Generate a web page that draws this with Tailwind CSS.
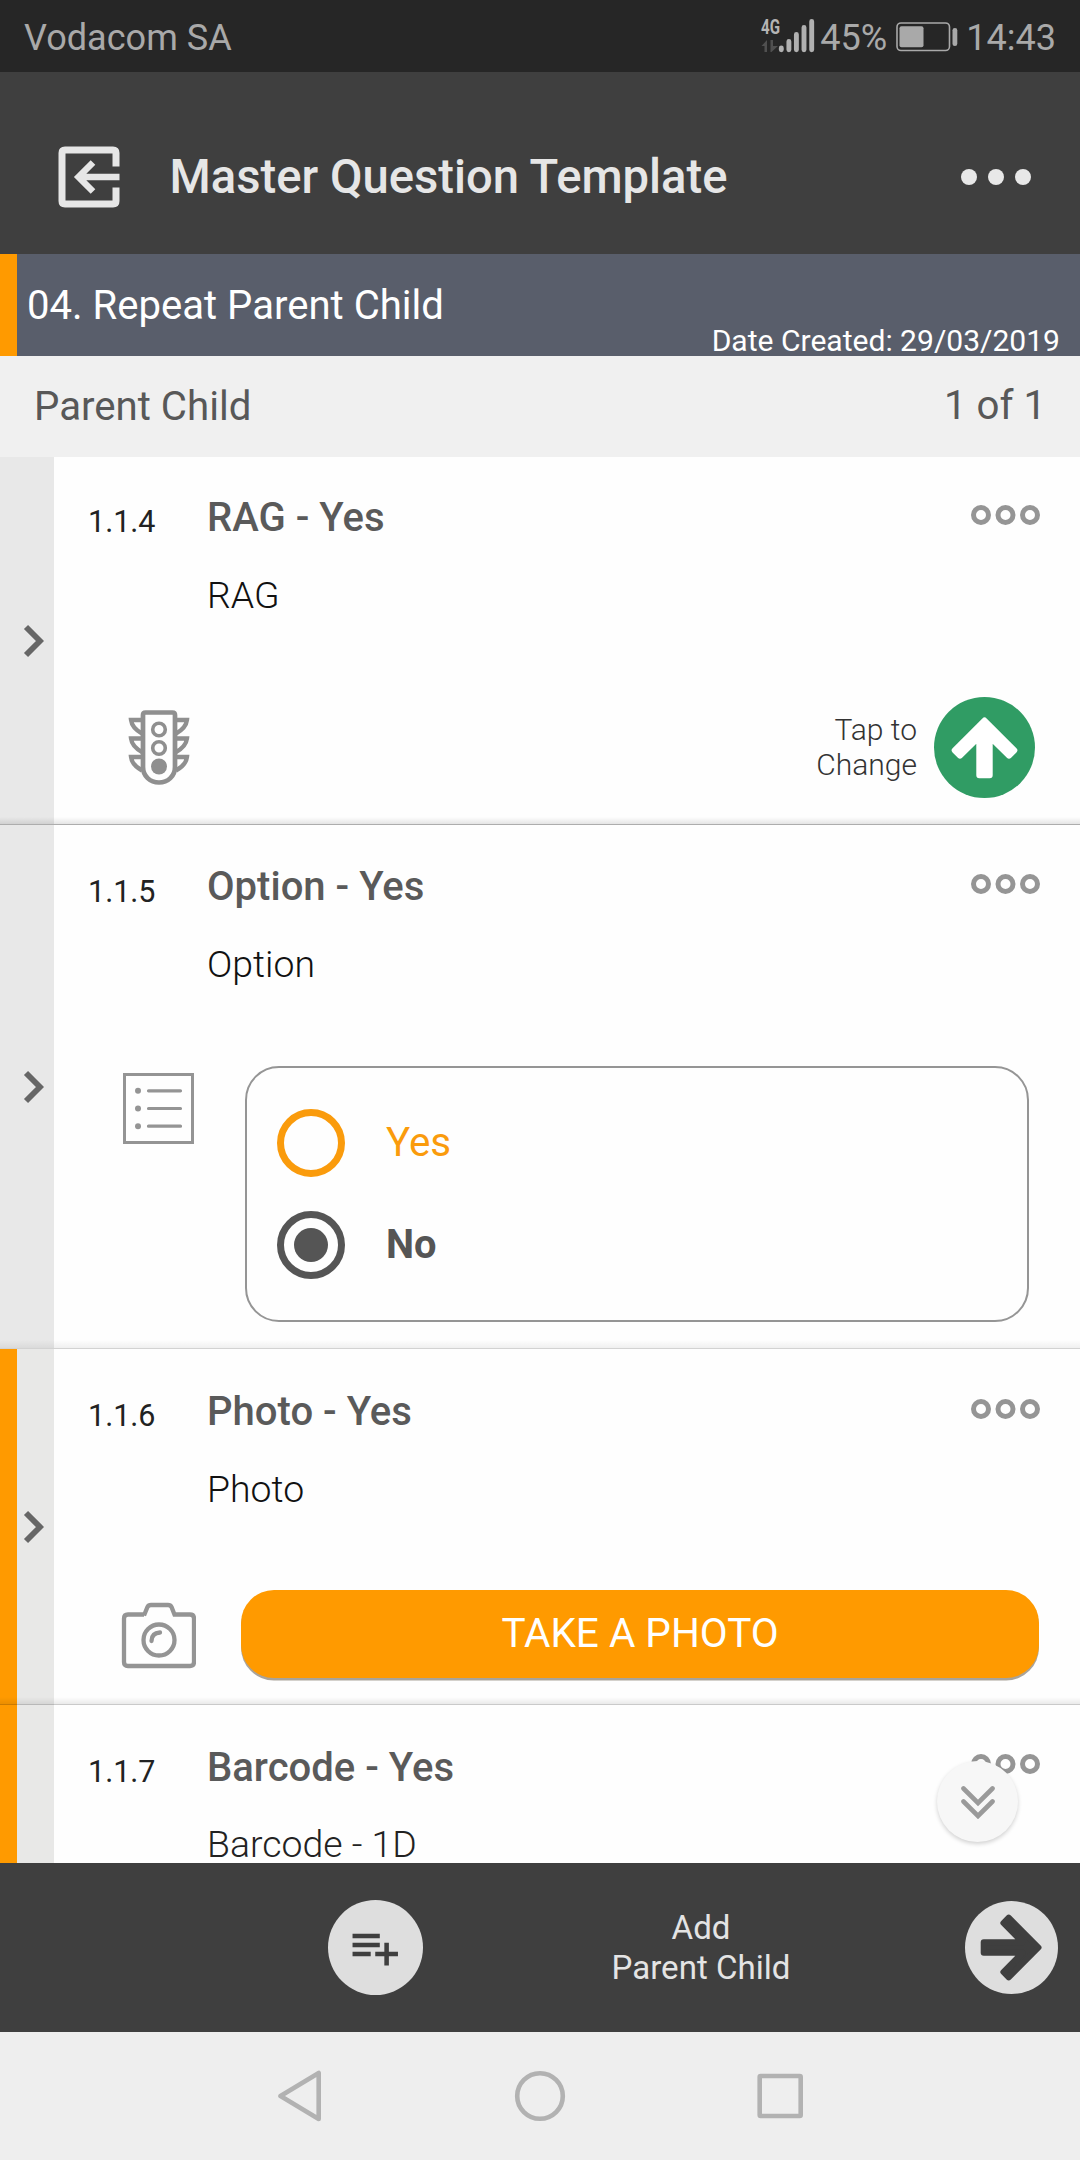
<!DOCTYPE html>
<html lang="en">
<head>
<meta charset="utf-8">
<title>Master Question Template</title>
<script src="https://cdn.jsdelivr.net/npm/@tailwindcss/browser@4"></script>
</head>
<body class="bg-white">
<svg class="hidden">
  <defs>
    <symbol id="more" viewBox="0 0 69 20"><g fill="none" stroke="#959595" stroke-width="5"><circle cx="10" cy="10" r="7.500"/><circle cx="34.5" cy="10" r="7.500"/><circle cx="59" cy="10" r="7.500"/></g></symbol>
    <symbol id="chev" viewBox="0 0 21 34"><path d="M3 3 17 17 3 31" fill="none" stroke="#666" stroke-width="5.8"/></symbol>
    <path id="arrow" d="M50.5 23.5 20.7 53.3 26 58.6 45.3 39.5V78.3H55.7V39.5L75 58.6 80.3 53.3Z" stroke-width="6" stroke-linejoin="round"/>
  </defs>
</svg>
<div class="flex h-[2160px] w-[1080px] flex-col overflow-hidden font-['Roboto',sans-serif]">

  <!-- Status bar -->
  <div class="flex h-[72px] shrink-0 items-center bg-[#262626] pt-[3px] pl-[24px] pr-[24px] text-[36.1px] leading-[40px] text-[#a9a9a9]">
    <span class="grow">Vodacom SA</span>
    <svg class="-mt-[3px] mr-[5px] h-[36px] w-[54px]" viewBox="761 18 54 36">
      <text x="761" y="33.5" font-family="Roboto" font-weight="700" font-size="20" textLength="19" lengthAdjust="spacingAndGlyphs" fill="#b4b4b4">4G</text>
      <path d="M761.500 46 767 40V52H764.500V46ZM770.500 40H773V46H778L771.500 52H770.500Z" fill="#505050"/>
      <g stroke="#b0b0b0" stroke-width="4.9" stroke-linecap="round"><path d="M781.300 48V49.700M788.900 41.400V49.700M796.400 34.400V49.700M804 27.400V49.700M811.700 21.400V49.700"/></g>
    </svg>
    <span>45%</span>
    <svg class="-mt-[2px] ml-[9px] mr-[8px] h-[30px] w-[62px]" viewBox="0 0 62 30">
      <rect x="1" y="1" width="52.500" height="27.500" rx="4" fill="none" stroke="#a9a9a9" stroke-width="1.6"/>
      <rect x="3.500" y="4.300" width="24" height="21" rx="2" fill="#a9a9a9"/>
      <rect x="56.500" y="6" width="4.800" height="18" rx="2.300" fill="#a9a9a9"/>
    </svg>
    <span>14:43</span>
  </div>

  <!-- App bar -->
  <div class="flex h-[182px] shrink-0 items-center bg-[#3f3f3f] pt-[28px] pl-[58px] pr-[49px]">
    <svg class="size-[62px]" viewBox="0 0 62 62" fill="none" stroke="#e6e6e6" stroke-width="7">
      <path d="M58 20.500V7Q58 4 55 4H7Q4 4 4 7V55Q4 58 7 58H55Q58 58 58 55V41.500"/>
      <path d="M61.500 31H21M35 16.500 20.500 31 35 45.500" stroke-width="6.500"/>
    </svg>
    <h1 class="ml-[49.500px] grow text-[47.2px] leading-[56px] font-medium text-[#e6e6e6]">Master Question Template</h1>
    <div class="flex gap-[11px]">
      <span class="size-4 rounded-full bg-[#e8e8e8]"></span><span class="size-4 rounded-full bg-[#e8e8e8]"></span><span class="size-4 rounded-full bg-[#e8e8e8]"></span>
    </div>
  </div>

  <!-- Section title -->
  <div class="flex h-[102px] shrink-0 justify-between border-l-[17px] border-[#ff9a00] bg-[#595e6b] pl-[10px] pr-[20px] text-white">
    <span class="text-[40.1px] leading-[104px]">04. Repeat Parent Child</span>
    <span class="self-end text-[30.050px] leading-[30px]">Date Created: 29/03/2019</span>
  </div>
  <div class="flex h-[101px] shrink-0 items-center justify-between bg-[#f0f0f0] pl-[34px] pr-[34px] text-[40.2px] text-[#585858]">
    <span class="mt-px">Parent Child</span><span>1 of 1</span>
  </div>

  <!-- Questions -->
  <div class="relative flex h-[1406px] shrink-0 flex-col overflow-hidden bg-[#fefefe]">

    <section class="relative flex h-[368px] shrink-0">
      <div class="flex w-[54px] items-center bg-[#e8e8e8] pl-[23px]"><svg class="h-[34px] w-[21px]"><use href="#chev"/></svg></div>
      <div class="grow pt-[37px]">
        <div class="flex h-[48px] leading-[48px]">
          <span class="mt-[4px] w-[153px] pl-[34px] text-[30.5px] text-[#222]">1.1.4</span>
          <h2 class="grow text-[40.050px] font-medium text-[#5a5a5a]">RAG - Yes</h2>
          <svg class="mt-[11px] mr-[40px] h-[20px] w-[69px]"><use href="#more"/></svg>
        </div>
        <p class="mt-[31px] ml-[153px] text-[37.4px] leading-[44px] font-light text-[#111]">RAG</p>
        <div class="mt-[80px] flex h-[101px] items-center pl-[74px] pr-[45px]">
          <svg class="h-[75px] w-[62px]" viewBox="0 0 62 75" fill="none" stroke="#8f8f8f" stroke-width="4.300">
            <path d="M15 5Q15 2.500 17.500 2.500H44.500Q47 2.500 47 5V57C47 66 40 72.500 31 72.500S15 66 15 57Z" stroke-width="4.700"/>
            <circle cx="31" cy="19.500" r="6.300" stroke-width="3.600"/><circle cx="31" cy="38" r="6.300" stroke-width="3.600"/><circle cx="31" cy="56.500" r="8" fill="#8f8f8f" stroke="none"/>
            <path d="M14 10H3Q4 18 14 23.500M14 28.500H3Q4 36.500 14 42M14 47H3Q4 55 14 60.500M48 10H59Q58 18 48 23.500M48 28.500H59Q58 36.500 48 42M48 47H59Q58 55 48 60.500"/>
          </svg>
          <p class="-mt-[2px] ml-auto text-right text-[30px] leading-[35px] font-light text-[#333]">Tap to<br>Change</p>
          <svg class="ml-[17px] size-[101px]" viewBox="0 0 101 101"><circle cx="50.500" cy="50.500" r="50.500" fill="#309c64"/><use href="#arrow" fill="#fff" stroke="#fff"/></svg>
        </div>
      </div>
      <div class="absolute inset-x-0 bottom-0 h-[8px] border-b border-[#adadad] bg-linear-to-b from-transparent to-black/10"></div>
    </section>

    <section class="relative flex h-[524px] shrink-0">
      <div class="flex w-[54px] items-center bg-[#e8e8e8] pl-[23px]"><svg class="h-[34px] w-[21px]"><use href="#chev"/></svg></div>
      <div class="grow pt-[38px]">
        <div class="flex h-[48px] leading-[48px]">
          <span class="mt-[5px] w-[153px] pl-[34px] text-[30.5px] text-[#222]">1.1.5</span>
          <h2 class="grow text-[40.050px] font-medium text-[#5a5a5a]">Option - Yes</h2>
          <svg class="mt-[11px] mr-[40px] h-[20px] w-[69px]"><use href="#more"/></svg>
        </div>
        <p class="mt-[31px] ml-[153px] text-[37.4px] leading-[44px] font-light text-[#111]">Option</p>
        <div class="mt-[80px] flex pl-[69px]">
          <svg class="mt-[7px] h-[71px] w-[71px]" viewBox="0 0 71 71" stroke="#949494" fill="none">
            <rect x="1.500" y="1.500" width="68" height="68" stroke-width="3"/>
            <path d="M25.500 17.800H57.500M25.500 35.500H57.500M25.500 53.200H57.500" stroke-width="3.200" stroke-linecap="round"/>
            <g fill="#949494" stroke="none"><circle cx="15" cy="17.800" r="3"/><circle cx="15" cy="35.500" r="3"/><circle cx="15" cy="53.200" r="3"/></g>
          </svg>
          <div class="ml-[51px] flex h-[256px] w-[784px] flex-col justify-center gap-[34px] rounded-[34px] border-2 border-[#959595] pl-[30px]">
            <div class="flex h-[68px] items-center gap-[41px] text-[40.3px] text-[#fa9b0c]">
              <span class="size-[68px] rounded-full border-[7px] border-[#fa9b0c]"></span><span>Yes</span>
            </div>
            <div class="flex h-[68px] items-center gap-[41px] text-[39.8px] font-bold text-[#555]">
              <span class="flex size-[68px] items-center justify-center rounded-full border-[7px] border-[#555]"><span class="size-[34px] rounded-full bg-[#555]"></span></span><span>No</span>
            </div>
          </div>
        </div>
      </div>
      <div class="absolute inset-x-0 bottom-0 h-[9px] border-b border-[#d2d2d2] bg-linear-to-b from-transparent to-black/6"></div>
    </section>

    <section class="relative flex h-[356px] shrink-0">
      <div class="flex w-[54px] items-center border-l-[17px] border-[#ff9a00] bg-[#e8e8e7] pl-[6px]"><svg class="h-[34px] w-[21px]"><use href="#chev"/></svg></div>
      <div class="grow pt-[39px]">
        <div class="flex h-[48px] leading-[48px]">
          <span class="mt-[4px] w-[153px] pl-[34px] text-[30.5px] text-[#222]">1.1.6</span>
          <h2 class="grow text-[40.050px] font-medium text-[#5a5a5a]">Photo - Yes</h2>
          <svg class="mt-[11px] mr-[40px] h-[20px] w-[69px]"><use href="#more"/></svg>
        </div>
        <p class="mt-[31px] ml-[153px] text-[37.4px] leading-[44px] font-light text-[#111]">Photo</p>
        <div class="mt-[79px] flex pl-[67px]">
          <svg class="mt-[12px] h-[67px] w-[75px]" viewBox="0 0 75 67" fill="none" stroke="#949494" stroke-width="4.300">
            <path d="M23 13.500 26.500 5Q27.500 3 30 3H47Q49.500 3 50.500 5L53.500 12.500H69Q73 12.500 73 16.500V60Q73 64 69 64H7Q3 64 3 60V16.500Q3 12.500 7 12.500H23"/>
            <circle cx="38" cy="38" r="15.500"/><path d="M30.500 39Q30.500 31 39 30.500" stroke-linecap="round"/>
          </svg>
          <div class="ml-[45px] h-[88px] w-[798px] rounded-[33px] bg-[#ff9a00] text-center text-[40.5px] leading-[87px] text-white shadow-[0_2.500px_0_#a9a39a]">TAKE A PHOTO</div>
        </div>
      </div>
      <div class="absolute inset-x-0 bottom-0 h-[8px] border-b border-black/20 bg-linear-to-b from-transparent to-black/8"></div>
    </section>

    <section class="flex h-[400px] shrink-0">
      <div class="w-[54px] border-l-[17px] border-[#ff9a00] bg-[#e8e8e7]"></div>
      <div class="grow pt-[39px]">
        <div class="flex h-[48px] leading-[48px]">
          <span class="mt-[4px] w-[153px] pl-[34px] text-[30.5px] text-[#222]">1.1.7</span>
          <h2 class="grow text-[40.050px] font-medium text-[#5a5a5a]">Barcode - Yes</h2>
          <svg class="mt-[10px] mr-[40px] h-[20px] w-[69px]"><use href="#more"/></svg>
        </div>
        <p class="mt-[30px] ml-[153px] text-[37.4px] leading-[44px] font-light text-[#222]">Barcode - 1D</p>
      </div>
    </section>

    <!-- Scroll-to-bottom button -->
    <div class="absolute right-[62px] bottom-[21px] flex size-[81px] items-center justify-center rounded-full bg-[#f7f7f7] shadow-[0_2px_4px_rgba(0,0,0,0.18)]">
      <svg class="h-[34px] w-[36px]" viewBox="0 0 36 34" fill="none" stroke="#9a9a9a" stroke-width="4.600" stroke-linecap="round"><path d="M3.500 3.500 18 18 32.500 3.500M3.500 16.500 18 31 32.500 16.500"/></svg>
    </div>
  </div>

  <!-- Bottom actions -->
  <div class="flex h-[169px] shrink-0 items-center bg-[#3f3f3f] pl-[328px] pr-[22px]">
    <div class="flex size-[95px] shrink-0 items-center justify-center rounded-full bg-[#dedede]">
      <svg class="size-[54.500px]" viewBox="0 0 24 24" fill="#3f3f3f"><path d="M14 10H2v2h12v-2zm0-4H2v2h12V6zm4 8v-4h-2v4h-4v2h4v4h2v-4h4v-2h-4zM2 16h8v-2H2v2z"/></svg>
    </div>
    <p class="ml-[168px] w-[220px] text-center text-[33.1px] leading-[39.3px] text-[#e4e4e4]">Add<br>Parent Child</p>
    <svg class="ml-auto size-[93px]" viewBox="4 4 93 93"><circle cx="50.500" cy="50.500" r="46.500" fill="#dedede"/><use href="#arrow" fill="#3f3f3f" stroke="#3f3f3f" transform="rotate(90 50.500 50.500)"/></svg>
  </div>

  <!-- System navigation -->
  <div class="flex h-[128px] shrink-0 items-center bg-[#eee] pl-[278px]">
    <svg class="h-[52px] w-[526px]" viewBox="278 2070 526 52" fill="none" stroke="#b2b2b2" stroke-width="4.600" stroke-linejoin="round">
      <path d="M280.500 2096 318.700 2073V2119Z"/><circle cx="540" cy="2096" r="22.800"/><rect x="759.700" y="2076" width="41" height="40" rx="1"/>
    </svg>
  </div>
</div>
</body>
</html>
